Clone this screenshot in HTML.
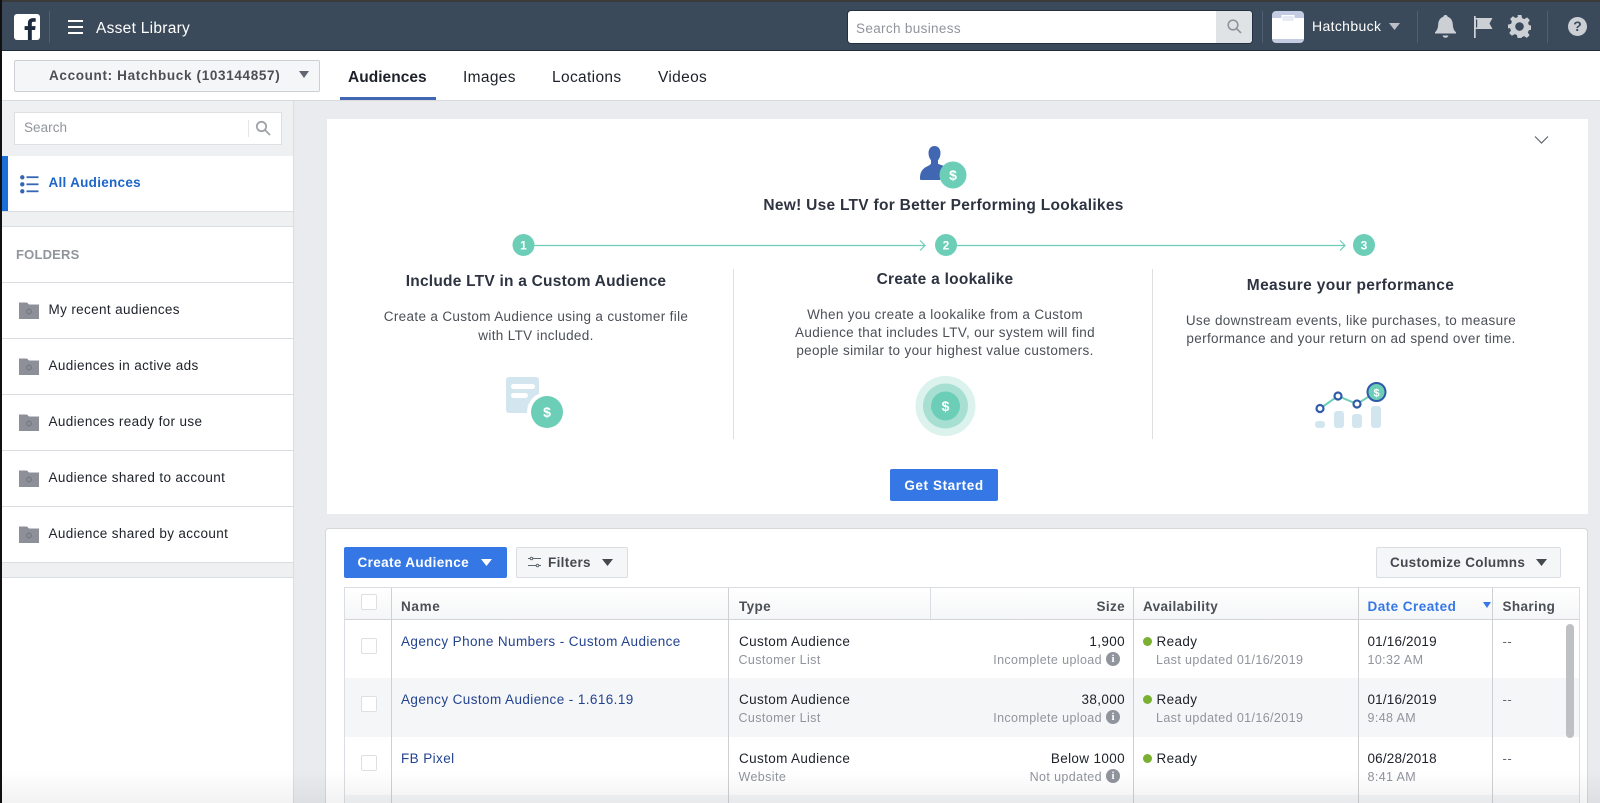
<!DOCTYPE html>
<html><head><meta charset="utf-8"><style>
html,body{margin:0;padding:0;background:#e9ebee}
#p{position:relative;width:1600px;height:803px;overflow:hidden;background:#e9ebee;font-family:"Liberation Sans",sans-serif;color:#1d2129}
#p div,#p svg{position:absolute}
.t{white-space:nowrap;line-height:20px;font-size:13.5px;letter-spacing:.36px}
.s{color:#90949c;font-size:12.5px;letter-spacing:.39px}
.l{color:#23438f;letter-spacing:.41px}
.n{letter-spacing:.17px}
.b{font-weight:bold}
.c{transform:translateX(-50%);text-align:center}
.r{transform:translateX(-100%)}
.h{top:597px;font-weight:bold;color:#4b4f56;letter-spacing:.36px}
.cb{width:14px;height:14px;border:1px solid #dddfe2;border-radius:2px;background:#fff;left:361px}
.v{width:1px;background:#ced0d4;top:588px;height:215px}
.d{left:1143px;width:9px;height:9px;border-radius:50%;background:#7ab032}
.f{left:2px;width:291px;height:1px;background:#dadde1}
.d2{color:#4b4f56;letter-spacing:.34px}
.i{width:14px;height:14px;border-radius:50%;background:#90949c;color:#fff;font:bold 11px/14px "Liberation Serif",serif;text-align:center}
.ds{color:#606770;letter-spacing:.6px;font-size:13px}
</style></head><body><div id="p">
<!-- header -->
<div style="left:0;top:0;width:1600px;height:51px;background:#3b4a5a;border-bottom:1px solid #1f2c3a;box-sizing:border-box"></div>
<div style="left:0;top:0;width:1600px;height:2px;background:#3a3a3a"></div>
<div style="left:0;top:0;width:2px;height:803px;background:#111"></div>
<svg style="left:14px;top:14px" width="26" height="26" viewBox="0 0 26 26"><rect width="26" height="26" rx="3" fill="#fff"/><path fill="#1c2b3d" d="M17.8 26V16h3.3l.5-3.9h-3.8V9.700c0-1.100.3-1.900 1.900-1.900h2V4.300c-.4-.05-1.600-.15-2.900-.15-2.900 0-4.900 1.800-4.900 5v2.950H10.600V16h3.300v10z"/></svg>
<div style="left:49px;top:11px;width:1px;height:32px;background:#4f6072"></div>
<div style="left:68px;top:20px;width:15px;height:2px;background:#fff"></div>
<div style="left:68px;top:26px;width:15px;height:2px;background:#fff"></div>
<div style="left:68px;top:32px;width:15px;height:2px;background:#fff"></div>
<div class="t" style="left:96px;top:19px;color:#fff;font-size:15.5px;letter-spacing:.28px">Asset Library</div>
<div style="left:848px;top:11px;width:404px;height:32px;background:#fff;border-radius:3px;overflow:hidden;box-shadow:0 0 0 1px #22303f"><div style="left:368px;top:0;width:36px;height:32px;background:#dfe3e6"></div></div>
<div class="t" style="color:#90949c;left:856px;top:19px;letter-spacing:.34px">Search business</div>
<svg style="left:1226px;top:18px" width="17" height="17" viewBox="0 0 17 17" fill="none" stroke="#90949c" stroke-width="1.600"><circle cx="7" cy="7" r="4.800"/><path d="M10.500 10.500l4.500 4.500"/></svg>
<div style="left:1262px;top:11px;width:1px;height:32px;background:#4f6072"></div>
<svg style="left:1272px;top:11px" width="32" height="32" viewBox="0 0 32 32"><rect width="32" height="32" rx="4" fill="#c3cce2"/><rect x="0" y="7" width="32" height="21" fill="#fff"/><rect x="10" y="4.500" width="12" height="6" fill="#e8ebf3" stroke="#fff" stroke-width="1"/></svg>
<div class="t" style="left:1312px;top:16px;color:#fff;font-size:14px;letter-spacing:.35px">Hatchbuck</div>
<svg style="left:1389px;top:23px" width="11" height="7" viewBox="0 0 11 7"><path d="M0 0h11L5.500 7z" fill="#bcc0c6"/></svg>
<div style="left:1417px;top:11px;width:1px;height:32px;background:#4f6072"></div>
<svg style="left:1434px;top:14px" width="23" height="25" viewBox="0 0 23 25"><path fill="#ccd0d5" d="M11.500 1c1.300 0 2 .8 2.100 1.700 3.500 1 5 4.200 5.200 7.500.2 3.800 1 6 3.200 8v1.300H1V18.200c2.200-2 3-4.200 3.200-8C4.400 6.900 5.900 3.700 9.400 2.700 9.500 1.800 10.200 1 11.500 1zM8.500 21.500h6c-.5 1.500-1.700 2.300-3 2.300s-2.500-.8-3-2.300z"/></svg>
<svg style="left:1474px;top:16px" width="19" height="22" viewBox="0 0 19 22"><rect x="0" y="0" width="1.700" height="22" fill="#ccd0d5"/><path fill="#ccd0d5" d="M1.500 2h17l-3 5.500 3 5.500h-17z"/><rect x="2" y="3.500" width="1.200" height="8" fill="#3b4a5a"/></svg>
<svg style="left:1508px;top:15px" width="23" height="23" viewBox="0 0 24 24"><path fill="#ccd0d5" fill-rule="evenodd" d="M10 0h4l.7 3.300 2.300 1 2.900-1.800 2.800 2.800-1.800 2.900 1 2.300 3.100.7v4l-3.300.7-1 2.300 1.800 2.900-2.800 2.800-2.900-1.800-2.300 1L14 24h-4l-.7-3.100-2.300-1-2.900 1.800-2.800-2.800 1.800-2.900-1-2.300L0 14v-4l3.100-.7 1-2.300L2.300 4.100l2.800-2.800L8 3.100l2.300-1zM12 7.500a4.500 4.500 0 100 9 4.500 4.500 0 000-9z"/></svg>
<div style="left:1547px;top:11px;width:1px;height:32px;background:#4f6072"></div>
<div style="left:1568px;top:17px;width:19px;height:19px;border-radius:50%;background:#ccd0d5;color:#3b4a5a;font-weight:bold;font-size:14px;line-height:19px;text-align:center">?</div>
<!-- subheader -->
<div style="left:2px;top:51px;width:1598px;height:49px;background:#fff;border-bottom:1px solid #d8dadd"></div>
<div style="left:14px;top:60px;width:304px;height:30px;background:#f5f6f7;border:1px solid #ccd0d5;border-radius:2px"></div>
<div class="t b" style="left:49px;top:66px;color:#4b4f56;letter-spacing:.66px">Account: Hatchbuck (103144857)</div>
<svg style="left:299px;top:71px" width="10" height="7" viewBox="0 0 10 7"><path d="M0 0h10L5 7z" fill="#606770"/></svg>
<div class="t" style="left:348px;top:68px;font-size:15.5px;letter-spacing:.03px;font-weight:bold;color:#1d2129">Audiences</div>
<div class="t" style="left:463px;top:68px;font-size:15.5px;letter-spacing:.33px;color:#1d2129">Images</div>
<div class="t" style="left:552px;top:68px;font-size:15.5px;letter-spacing:.35px;color:#1d2129">Locations</div>
<div class="t" style="left:658px;top:68px;font-size:15.5px;letter-spacing:.33px;color:#1d2129">Videos</div>
<div style="left:340px;top:97px;width:96px;height:3px;background:#4267b2"></div>
<!-- sidebar -->
<div style="left:2px;top:101px;width:291px;height:702px;background:#fff;border-right:1px solid #dadde1;box-sizing:content-box"></div>
<div style="left:2px;top:101px;width:291px;height:55px;background:#eff0f2"></div>
<div style="left:14px;top:112px;width:266px;height:31px;background:#fff;border:1px solid #dddfe2"></div>
<div class="t" style="left:24px;top:118px;color:#90949c;letter-spacing:.05px">Search</div>
<div style="left:248px;top:120px;width:1px;height:17px;background:#e4e5e8"></div>
<svg style="left:255px;top:120px" width="16" height="16" viewBox="0 0 16 16" fill="none" stroke="#a0a3a9" stroke-width="1.800"><circle cx="6.500" cy="6.500" r="4.700"/><path d="M10 10l5 5"/></svg>
<div style="left:2px;top:156px;width:6px;height:55px;background:#1d6fd8"></div>
<svg style="left:20px;top:175px" width="19" height="19" viewBox="0 0 19 19" fill="#3566b5"><circle cx="2.300" cy="2.300" r="2.200"/><circle cx="2.300" cy="9.300" r="2.200"/><circle cx="2.300" cy="16.300" r="2.200"/><rect x="6.500" y="1.300" width="12" height="1.800"/><rect x="6.500" y="8.400" width="12" height="1.800"/><rect x="6.500" y="15.400" width="12" height="1.800"/></svg>
<div class="t b" style="left:48.500px;top:173px;color:#1c65c9;letter-spacing:.28px">All Audiences</div>
<div style="left:2px;top:211px;width:291px;height:16px;background:#eff0f2;border-top:1px solid #dadde1;border-bottom:1px solid #dadde1;box-sizing:border-box"></div>
<div class="t b" style="left:16px;top:245px;color:#90949c;font-size:13px;letter-spacing:.2px">FOLDERS</div>
<div class="f" style="top:282px"></div><div class="f" style="top:338px"></div><div class="f" style="top:394px"></div><div class="f" style="top:450px"></div><div class="f" style="top:506px"></div>
<div style="left:2px;top:562px;width:291px;height:16px;background:#eff0f2;border-top:1px solid #dadde1;border-bottom:1px solid #dadde1;box-sizing:border-box"></div>
<svg style="left:19px;top:302px" width="20" height="18" viewBox="0 0 20 18"><path d="M0 .5h8l2 2h10v14.500H0z" fill="#8d9098"/><circle cx="10" cy="9.500" r="2.300" fill="none" stroke="#777a82" stroke-width="1.300"/></svg>
<svg style="left:19px;top:358px" width="20" height="18" viewBox="0 0 20 18"><path d="M0 .5h8l2 2h10v14.500H0z" fill="#8d9098"/><circle cx="10" cy="9.500" r="2.300" fill="none" stroke="#777a82" stroke-width="1.300"/></svg>
<svg style="left:19px;top:414px" width="20" height="18" viewBox="0 0 20 18"><path d="M0 .5h8l2 2h10v14.500H0z" fill="#8d9098"/><circle cx="10" cy="9.500" r="2.300" fill="none" stroke="#777a82" stroke-width="1.300"/></svg>
<svg style="left:19px;top:470px" width="20" height="18" viewBox="0 0 20 18"><path d="M0 .5h8l2 2h10v14.500H0z" fill="#8d9098"/><circle cx="10" cy="9.500" r="2.300" fill="none" stroke="#777a82" stroke-width="1.300"/></svg>
<svg style="left:19px;top:526px" width="20" height="18" viewBox="0 0 20 18"><path d="M0 .5h8l2 2h10v14.500H0z" fill="#8d9098"/><circle cx="10" cy="9.500" r="2.300" fill="none" stroke="#777a82" stroke-width="1.300"/></svg>
<div class="t" style="left:48.500px;top:300px">My recent audiences</div>
<div class="t" style="left:48.500px;top:356px">Audiences in active ads</div>
<div class="t" style="left:48.500px;top:412px">Audiences ready for use</div>
<div class="t" style="left:48.500px;top:468px">Audience shared to account</div>
<div class="t" style="left:48.500px;top:524px">Audience shared by account</div>
<!-- banner -->
<div style="left:327px;top:119px;width:1261px;height:395px;background:#fff"></div>
<svg style="left:1534px;top:135px" width="15" height="10" viewBox="0 0 15 10" fill="none" stroke="#606770" stroke-width="1.200"><path d="M1 1.500l6.500 6.500L14 1.500"/></svg>
<svg style="left:920px;top:146px" width="47" height="44" viewBox="0 0 47 44"><path fill="#4267b2" d="M14.500 0c3.700 0 6 3 6 7 0 3-1 5.500-2.500 7.200v3.500c2.500 1.300 6 2 9 3.300L20 34H1c-1 0-1-1-1-2 0-6 2.500-9 6-11 2-1 4-2 5-3.300v-3.500C9.500 12.500 8.500 10 8.500 7c0-4 2.300-7 6-7z"/><circle cx="33" cy="29" r="13.500" fill="#6dceb8"/><text x="33" y="34" text-anchor="middle" font-family="Liberation Sans" font-weight="bold" font-size="14" fill="#fff">$</text></svg>
<div class="t c b" style="left:943.500px;top:196px;font-size:15.5px;letter-spacing:.28px;color:#2d3340">New! Use LTV for Better Performing Lookalikes</div>
<svg style="left:500px;top:230px" width="890" height="30" viewBox="0 0 890 30"><g fill="none" stroke="#6dceb8" stroke-width="1.200"><path d="M23 15.500H425M420 10.500l5 5-5 5M446 15.500H845M840 10.500l5 5-5 5"/></g><g fill="#6dceb8"><circle cx="23.500" cy="15" r="11"/><circle cx="446" cy="15" r="11"/><circle cx="864" cy="15" r="11"/></g><g font-family="Liberation Sans" font-weight="bold" font-size="12" fill="#fff" text-anchor="middle"><text x="23.500" y="19.500">1</text><text x="446" y="19.500">2</text><text x="864" y="19.500">3</text></g></svg>
<div style="left:733px;top:269px;width:1px;height:170px;background:#dddfe2"></div>
<div style="left:1152px;top:269px;width:1px;height:170px;background:#dddfe2"></div>
<div class="t c b" style="left:536px;top:272px;font-size:15.5px;letter-spacing:.23px;color:#2d3340">Include LTV in a Custom Audience</div>
<div class="t c b" style="left:945px;top:270px;font-size:15.5px;letter-spacing:.28px;color:#2d3340">Create a lookalike</div>
<div class="t c b" style="left:1350.500px;top:276px;font-size:15.5px;letter-spacing:.35px;color:#2d3340">Measure your performance</div>
<div class="t c d2" style="left:536px;top:307px">Create a Custom Audience using a customer file</div>
<div class="t c d2" style="left:536px;top:326px">with LTV included.</div>
<div class="t c d2" style="left:945px;top:305px">When you create a lookalike from a Custom</div>
<div class="t c d2" style="left:945px;top:323px">Audience that includes LTV, our system will find</div>
<div class="t c d2" style="left:945px;top:341px">people similar to your highest value customers.</div>
<div class="t c d2" style="left:1351px;top:311px">Use downstream events, like purchases, to measure</div>
<div class="t c d2" style="left:1351px;top:329px">performance and your return on ad spend over time.</div>
<svg style="left:500px;top:370px" width="70" height="70" viewBox="0 0 70 70"><rect x="6" y="7" width="33" height="36" rx="3" fill="#d3e6f0"/><rect x="11" y="14" width="24" height="5" rx="2.500" fill="#fff"/><rect x="11" y="23" width="17" height="5" rx="2.500" fill="#fff"/><circle cx="47" cy="42" r="20" fill="#fff"/><circle cx="47" cy="42" r="16" fill="#6dceb8"/><text x="47" y="47" text-anchor="middle" font-family="Liberation Sans" font-weight="bold" font-size="14" fill="#fff">$</text></svg>
<svg style="left:910px;top:371px" width="70" height="70" viewBox="0 0 70 70"><circle cx="35.500" cy="35" r="30" fill="#dcf2ec"/><circle cx="35.500" cy="35" r="22.500" fill="#a7e0d2"/><circle cx="35.500" cy="35" r="14.500" fill="#6dceb8"/><text x="35.500" y="40" text-anchor="middle" font-family="Liberation Sans" font-weight="bold" font-size="14" fill="#fff">$</text></svg>
<svg style="left:1300px;top:370px" width="100" height="70" viewBox="0 0 100 70"><g fill="#d3e6f0"><rect x="15" y="51" width="10" height="7" rx="3"/><rect x="34" y="41" width="10" height="17" rx="3"/><rect x="52" y="44" width="10" height="14" rx="3"/><rect x="71" y="36" width="10" height="22" rx="3"/></g><path d="M20 38.500L38 26l19 8 19-12" fill="none" stroke="#6dceb8" stroke-width="2"/><g fill="#fff" stroke="#2f5aa8" stroke-width="2.200"><circle cx="20" cy="38.500" r="3.500"/><circle cx="38" cy="26" r="3.500"/><circle cx="57" cy="34" r="3.500"/></g><circle cx="76.500" cy="22" r="9" fill="#6dceb8" stroke="#2f5aa8" stroke-width="2"/><text x="76.500" y="26.500" text-anchor="middle" font-family="Liberation Sans" font-weight="bold" font-size="11" fill="#fff">$</text></svg>
<div style="left:890px;top:469px;width:108px;height:32px;background:#3578e5;border-radius:2px;color:#fff;font-weight:bold;font-size:13.5px;letter-spacing:.6px;line-height:33px;text-align:center;white-space:nowrap">Get Started</div>
<!-- table card -->
<div style="left:325px;top:528px;width:1263px;height:290px;background:#fff;border:1px solid #d5d7da;border-radius:4px;box-sizing:border-box"></div>
<div style="left:344px;top:547px;width:163px;height:31px;background:#3578e5;border-radius:2px"></div>
<div class="t b" style="left:357.500px;top:553px;color:#fff;letter-spacing:.36px">Create Audience</div>
<svg style="left:481px;top:559px" width="11" height="7" viewBox="0 0 11 7"><path d="M0 0h11L5.500 7z" fill="#fff"/></svg>
<div style="left:516px;top:547px;width:110px;height:29px;background:#f5f6f7;border:1px solid #dadde1;border-radius:2px"></div>
<svg style="left:528px;top:556px" width="13" height="12" viewBox="0 0 13 12" fill="none" stroke="#606770"><path d="M0 2.500h13M0 9.500h13"/><circle cx="3.500" cy="2.500" r="1.300" fill="#f5f6f7"/><circle cx="9.500" cy="9.500" r="1.300" fill="#f5f6f7"/></svg>
<div class="t b" style="left:548px;top:553px;color:#444950;letter-spacing:.34px">Filters</div>
<svg style="left:602px;top:559px" width="11" height="7" viewBox="0 0 11 7"><path d="M0 0h11L5.500 7z" fill="#444950"/></svg>
<div style="left:1376px;top:547px;width:183px;height:29px;background:#f5f6f7;border:1px solid #dadde1;border-radius:2px"></div>
<div class="t b" style="left:1390px;top:553px;color:#444950;letter-spacing:.32px">Customize Columns</div>
<svg style="left:1536px;top:559px" width="11" height="7" viewBox="0 0 11 7"><path d="M0 0h11L5.500 7z" fill="#444950"/></svg>
<!-- table -->
<div style="left:344px;top:587px;width:1236px;height:216px;border:1px solid #dadde1;border-bottom:0;box-sizing:border-box"></div>
<div style="left:345px;top:588px;width:1234px;height:31px;background:linear-gradient(#fff,#f5f6f7);border-bottom:1px solid #d3d5d8"></div>
<div style="left:345px;top:678px;width:1234px;height:59px;background:#f5f6f8"></div>
<div style="left:345px;top:795px;width:1234px;height:8px;background:#f5f6f8"></div>
<div class="v" style="left:391px"></div><div class="v" style="left:728px"></div><div class="v" style="left:1133px"></div><div class="v" style="left:1358px"></div><div class="v" style="left:1492px"></div>
<div class="v" style="left:930px;height:31px;background:#dadde1"></div>
<div class="cb" style="top:594px"></div><div class="cb" style="top:638px"></div><div class="cb" style="top:696px"></div><div class="cb" style="top:755px"></div>
<div class="t h" style="left:401px;letter-spacing:.68px">Name</div><div class="t h" style="left:739px">Type</div>
<div class="t h r" style="left:1125px">Size</div><div class="t h" style="left:1143px">Availability</div>
<div class="t h" style="left:1367.500px;color:#3578e5;letter-spacing:.46px">Date Created</div><div class="t h" style="left:1502.500px">Sharing</div>
<svg style="left:1483px;top:602px" width="8" height="6" viewBox="0 0 8 6"><path d="M0 0h8L4 6z" fill="#3578e5"/></svg>
<div style="left:1566px;top:624px;width:8px;height:114px;border-radius:4px;background:#bec0c3"></div>
<!-- row 1 -->
<div class="t l" style="left:401px;top:632px">Agency Phone Numbers - Custom Audience</div>
<div class="t" style="left:739px;top:632px">Custom Audience</div><div class="t s" style="left:738.500px;top:650px">Customer List</div>
<div class="t r" style="left:1125px;top:632px">1,900</div><div class="t s r" style="left:1102px;top:650px">Incomplete upload</div><div class="i" style="left:1106px;top:652px">i</div>
<div class="d" style="top:637px"></div><div class="t" style="left:1156.500px;top:632px">Ready</div><div class="t s" style="left:1156px;top:650px">Last updated 01/16/2019</div>
<div class="t n" style="left:1367.500px;top:632px">01/16/2019</div><div class="t s" style="left:1367.500px;top:650px">10:32 AM</div><div class="t ds" style="left:1502.500px;top:632px">--</div>
<!-- row 2 -->
<div class="t l" style="left:401px;top:690px">Agency Custom Audience - 1.616.19</div>
<div class="t" style="left:739px;top:690px">Custom Audience</div><div class="t s" style="left:738.500px;top:708px">Customer List</div>
<div class="t r" style="left:1125px;top:690px">38,000</div><div class="t s r" style="left:1102px;top:708px">Incomplete upload</div><div class="i" style="left:1106px;top:710px">i</div>
<div class="d" style="top:695px"></div><div class="t" style="left:1156.500px;top:690px">Ready</div><div class="t s" style="left:1156px;top:708px">Last updated 01/16/2019</div>
<div class="t n" style="left:1367.500px;top:690px">01/16/2019</div><div class="t s" style="left:1367.500px;top:708px">9:48 AM</div><div class="t ds" style="left:1502.500px;top:690px">--</div>
<!-- row 3 -->
<div class="t l" style="left:401px;top:749px">FB Pixel</div>
<div class="t" style="left:739px;top:749px">Custom Audience</div><div class="t s" style="left:738.500px;top:767px">Website</div>
<div class="t r" style="left:1125px;top:749px">Below 1000</div><div class="t s r" style="left:1102px;top:767px">Not updated</div><div class="i" style="left:1106px;top:769px">i</div>
<div class="d" style="top:754px"></div><div class="t" style="left:1156.500px;top:749px">Ready</div>
<div class="t n" style="left:1367.500px;top:749px">06/28/2018</div><div class="t s" style="left:1367.500px;top:767px">8:41 AM</div><div class="t ds" style="left:1502.500px;top:749px">--</div>
<!-- bottom fade -->
<div style="left:0;top:770px;width:1600px;height:33px;background:linear-gradient(rgba(0,0,0,0),rgba(0,0,0,.05))"></div>
</div></body></html>
